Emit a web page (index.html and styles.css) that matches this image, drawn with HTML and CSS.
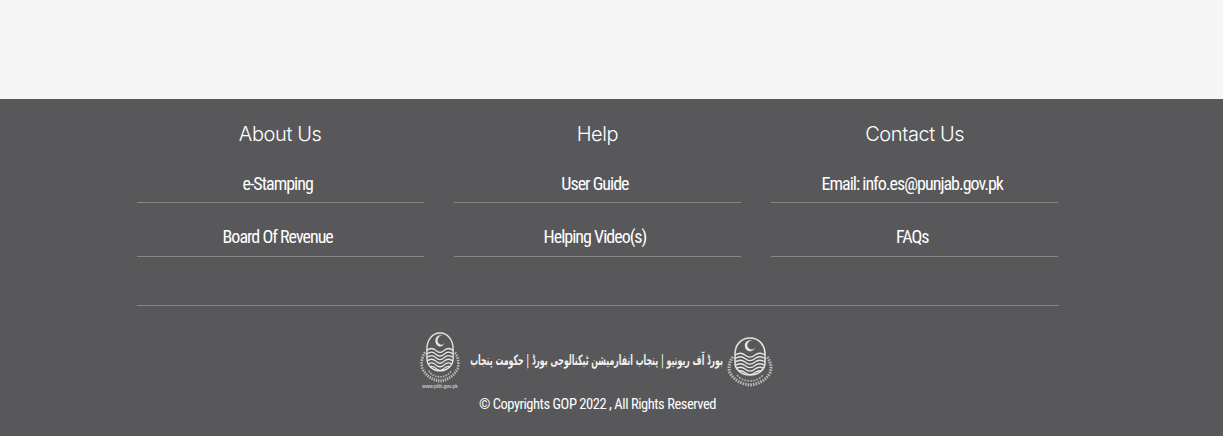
FILE: index.html
```
<!DOCTYPE html>
<html lang="en">
<head>
<meta charset="utf-8">
<title>e-Stamping</title>
<link rel="stylesheet" href="styles.css">
</head>
<body>
<svg class="defs" width="0" height="0" aria-hidden="true">
  <defs>
    <clipPath id="oval-clip">
      <path d="M24 1C33 1 39 8 39 17V26C39 33 32 38 24 38C16 38 9 33 9 26V17C9 8 15 1 24 1Z"/>
    </clipPath>
  </defs>
  <symbol id="emblem" viewBox="0 0 48 50" preserveAspectRatio="none">
    <g fill="none" stroke="#e6e6e6">
      <path d="M24 1C33 1 39 8 39 17V26C39 33 32 38 24 38C16 38 9 33 9 26V17C9 8 15 1 24 1Z" stroke-width="1.500"/>
      <g clip-path="url(#oval-clip)" stroke-width="1.300">
        <path d="M9 18C13 15.500 16 15.500 19 18S26 20.500 29 18S35 15.500 39 18"/>
        <path d="M9 21.500C13 19 16 19 19 21.500S26 24 29 21.500S35 19 39 21.500"/>
        <path d="M9 25C13 22.500 16 22.500 19 25S26 27.500 29 25S35 22.500 39 25"/>
        <path d="M9 28.500C13 26 16 26 19 28.500S26 31 29 28.500S35 26 39 28.500"/>
        <path d="M9 32C13 29.500 16 29.500 19 32S26 34.500 29 32S35 29.500 39 32"/>
        <path d="M9 35.500C13 33 16 33 19 35.500S26 38 29 35.500S35 33 39 35.500"/>
      </g>
      <path d="M7 20C3 25 2 31 4 36C8 43 15 47 24 48C33 47 40 43 44 36C46 31 45 25 41 20" stroke-width="3" stroke-dasharray="1.500 1.100" opacity=".7"/>
      <path d="M11 38C14 42 19 44 24 44C29 44 34 42 37 38" stroke-width="1.600" stroke-dasharray="2 1" opacity=".6"/>
    </g>
    <path d="M27 4A5.500 5.500 0 1 0 29.500 10A4.300 4.300 0 1 1 27 4Z" fill="#e6e6e6"/>
  </symbol>
</svg>
<main class="page-space"></main>
<footer class="footer">
  <div class="footer-inner">
    <div class="columns">
      <section class="column">
        <h2 class="column-title">About Us</h2>
        <a class="column-link" href="#">e-Stamping</a>
        <a class="column-link" href="#">Board Of Revenue</a>
      </section>
      <section class="column">
        <h2 class="column-title">Help</h2>
        <a class="column-link" href="#">User Guide</a>
        <a class="column-link" href="#">Helping Video(s)</a>
      </section>
      <section class="column">
        <h2 class="column-title">Contact Us</h2>
        <a class="column-link" href="#">Email: info.es@punjab.gov.pk</a>
        <a class="column-link" href="#">FAQs</a>
      </section>
    </div>
    <div class="brand">
      <div class="brand-row">
        <div class="emblem-left">
          <svg class="emblem-small"><use href="#emblem"/></svg>
          <span class="emblem-url">www.pitb.gov.pk</span>
        </div>
        <div class="brand-urdu-box">
          <span class="brand-urdu" lang="ur" dir="rtl">بورڈ آف ریونیو | پنجاب انفارمیشن ٹیکنالوجی بورڈ | حکومت پنجاب</span>
        </div>
        <svg class="emblem-large"><use href="#emblem"/></svg>
      </div>
      <p class="copyright">© Copyrights GOP 2022 , All Rights Reserved</p>
    </div>
  </div>
</footer>
</body>
</html>
```
FILE: styles.css
```
* {
  box-sizing: border-box;
}

html,
body {
  margin: 0;
  padding: 0;
}

body {
  height: 436px;
  overflow: hidden;
  background: #f5f5f5;
  font-family: Roboto, "Liberation Sans", sans-serif;
}

.defs {
  display: block;
  height: 0;
}

.page-space {
  height: 99px;
}

.footer {
  height: 337px;
  background: #58585a;
  color: #fff;
}

.footer-inner {
  width: 922px;
  margin-left: 136.500px;
}

.columns {
  display: grid;
  grid-template-columns: repeat(3, 287.300px);
  column-gap: 30px;
  height: 207px;
  border-bottom: 1px solid #8b8685;
}

.column {
  display: flex;
  flex-direction: column;
}

.column-title {
  margin: 0;
  height: 54px;
  padding-top: 21px;
  font-family: Inter, sans-serif;
  font-size: 20px;
  font-weight: 300;
  line-height: 28px;
  letter-spacing: -.4px;
  text-align: center;
}

.column-link {
  display: block;
  height: 50px;
  padding: 21px 5px 0 0;
  border-bottom: 1px solid #8b8685;
  color: #fff;
  font-size: 18px;
  font-stretch: 75%;
  line-height: 20px;
  letter-spacing: -1px;
  text-align: center;
  text-decoration: none;
}

.column-link + .column-link {
  height: 54px;
  padding-top: 24px;
}

.brand {
  display: flex;
  flex-direction: column;
  align-items: center;
}

.brand-row {
  display: flex;
  align-items: flex-start;
  width: 356px;
  height: 58px;
  margin-top: 27px;
  margin-left: -1px;
}

.emblem-left {
  display: flex;
  flex-direction: column;
  align-items: center;
  width: 42px;
  flex: none;
}

.emblem-small {
  width: 42px;
  height: 51px;
  margin-top: -1px;
}

.emblem-url {
  font-family: "Liberation Sans", sans-serif;
  font-size: 5px;
  line-height: 7px;
  color: #e4e4e4;
  white-space: nowrap;
}

.brand-urdu-box {
  flex: none;
  width: 254px;
  height: 20px;
  margin: 17px 0 0 8px;
  display: flex;
  justify-content: flex-end;
}

.brand-urdu {
  flex: none;
  font-family: "DejaVu Sans", sans-serif;
  font-size: 14px;
  font-weight: 700;
  line-height: 20px;
  color: #f0f0f0;
  white-space: nowrap;
  transform: scaleX(.558);
  transform-origin: right center;
}

.emblem-large {
  flex: none;
  width: 48px;
  height: 50px;
  margin: 4px 0 0 3px;
}

.copyright {
  margin: 4px 0 0;
  font-size: 14.500px;
  font-stretch: 75%;
  line-height: 20px;
  letter-spacing: -.45px;
  color: #fff;
}
```
